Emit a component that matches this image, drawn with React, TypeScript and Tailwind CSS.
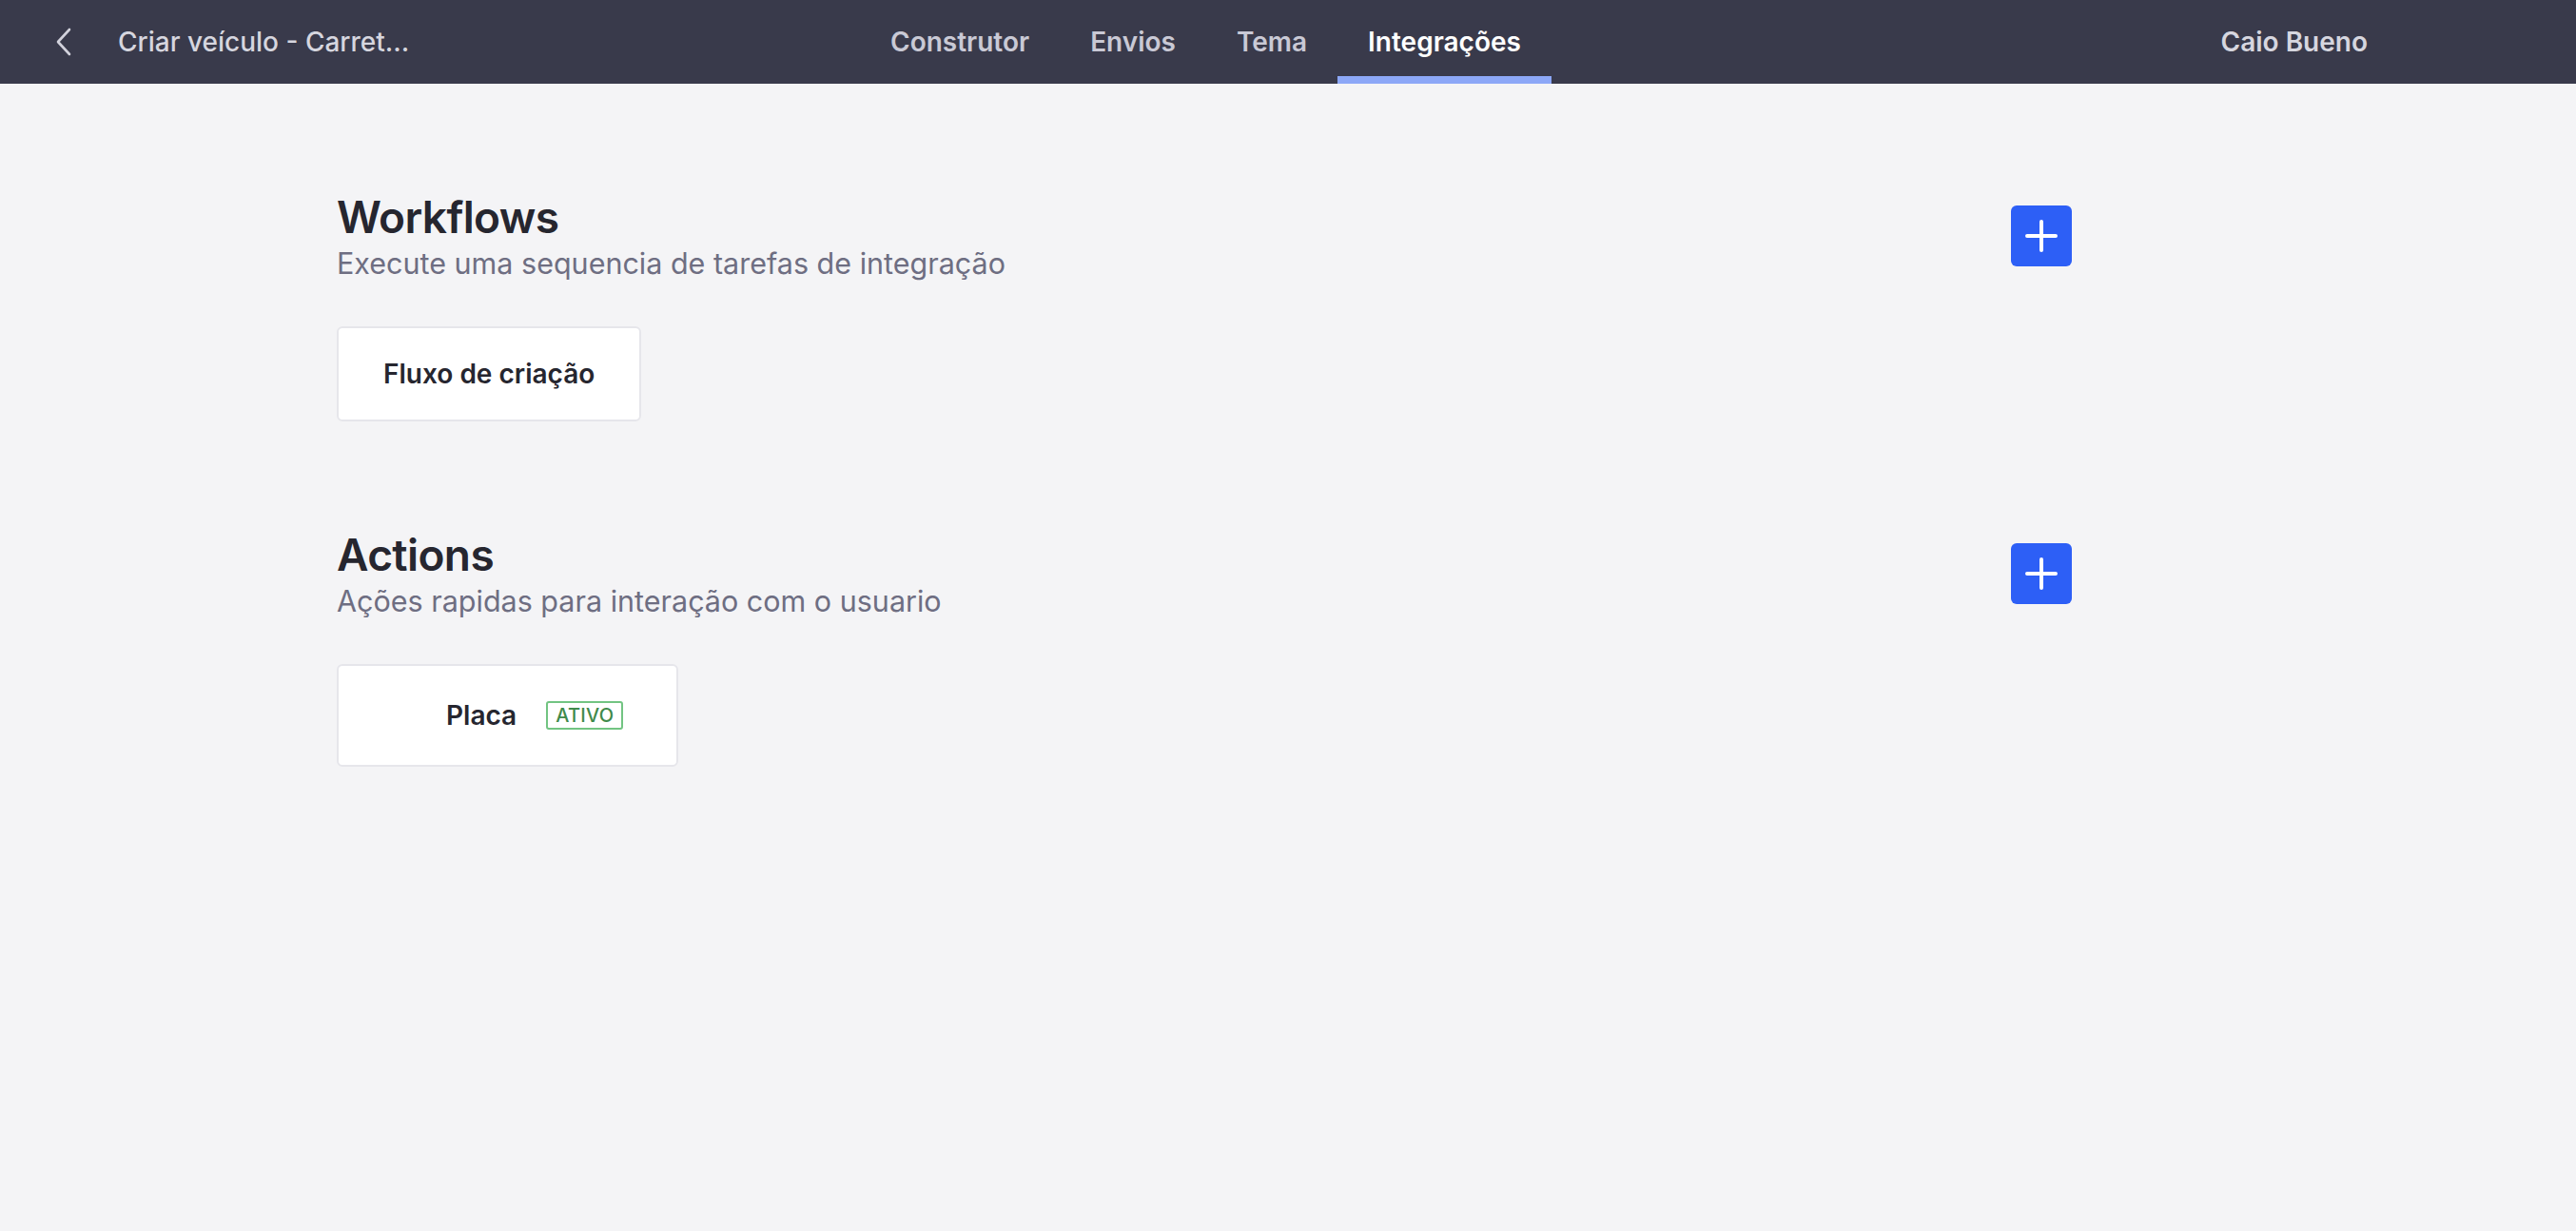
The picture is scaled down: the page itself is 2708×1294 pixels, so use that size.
import React from 'react';

const tabs = ['Construtor', 'Envios', 'Tema', 'Integrações'];

const PlusButton: React.FC = () => (
  <button className="flex h-[64px] w-[64px] items-center justify-center rounded-[6px] bg-[#2d5ff6]">
    <svg width="34" height="34" viewBox="0 0 34 34" fill="none" stroke="white" strokeWidth="4" strokeLinecap="round">
      <path d="M17 2v30M2 17h30" />
    </svg>
  </button>
);

interface SectionProps {
  title: string;
  subtitle: string;
  children: React.ReactNode;
}

const Section: React.FC<SectionProps> = ({ title, subtitle, children }) => (
  <section>
    <div className="flex items-center justify-between">
      <div>
        <h2 className="text-[46px] font-semibold leading-[58px] tracking-[-0.6px] text-[#26262f]">{title}</h2>
        <p className="text-[30.5px] leading-[40px] text-[#6e6e82]">{subtitle}</p>
      </div>
      <PlusButton />
    </div>
    <div className="mt-[46px] flex gap-6">{children}</div>
  </section>
);

export default function App() {
  return (
    <div className="min-h-screen bg-[#f4f4f6]" style={{ fontFamily: 'Inter, "Noto Sans", sans-serif' }}>
      <header className="flex h-[88px] items-stretch bg-[#393a4b]">
        <div className="flex w-[904px] items-center pl-[58px]">
          <svg width="18" height="30" viewBox="0 0 18 30" fill="none" stroke="#d2d2dc" strokeWidth="2.6" strokeLinecap="round" strokeLinejoin="round">
            <path d="M15 2 3 15l12 13" />
          </svg>
          <span className="ml-[48px] text-[28px] font-medium text-[#d6d6df]">Criar veículo - Carret...</span>
        </div>
        <nav className="flex items-stretch">
          {tabs.map((t, i) => {
            const active = i === tabs.length - 1;
            return (
              <div
                key={t}
                className={
                  active
                    ? 'flex items-center border-b-[8px] border-[#8ca7f7] px-[32px] pt-[8px] text-[28px] font-semibold text-white'
                    : 'flex items-center border-b-[8px] border-transparent px-[32px] pt-[8px] text-[28px] font-semibold text-[#c9c9d5]'
                }
              >
                {t}
              </div>
            );
          })}
        </nav>
        <div className="flex-1" />
        <div className="flex items-center pr-[219px] text-[28px] font-semibold text-[#d6d6df]">Caio Bueno</div>
      </header>

      <main className="ml-[354px] w-[1824px] pt-[111px]">
        <Section title="Workflows" subtitle="Execute uma sequencia de tarefas de integração">
          <div className="flex h-[100px] items-center rounded-[6px] border-2 border-[#e6e6eb] bg-white px-[47px] text-[28px] font-semibold text-[#26262f]">
            Fluxo de criação
          </div>
        </Section>

        <div className="mt-[111px]">
          <Section title="Actions" subtitle="Ações rapidas para interação com o usuario">
            <div className="flex h-[108px] items-center rounded-[6px] border-2 border-[#e6e6eb] bg-white pl-[113px] pr-[56px]">
              <span className="text-[28px] font-semibold text-[#26262f]">Placa</span>
              <span className="ml-[31px] rounded-[3px] border-2 border-[#72c482] px-[8px] text-[20px] font-medium leading-[26px] tracking-[0.3px] text-[#3f8a4b]">
                ATIVO
              </span>
            </div>
          </Section>
        </div>
      </main>
    </div>
  );
}
